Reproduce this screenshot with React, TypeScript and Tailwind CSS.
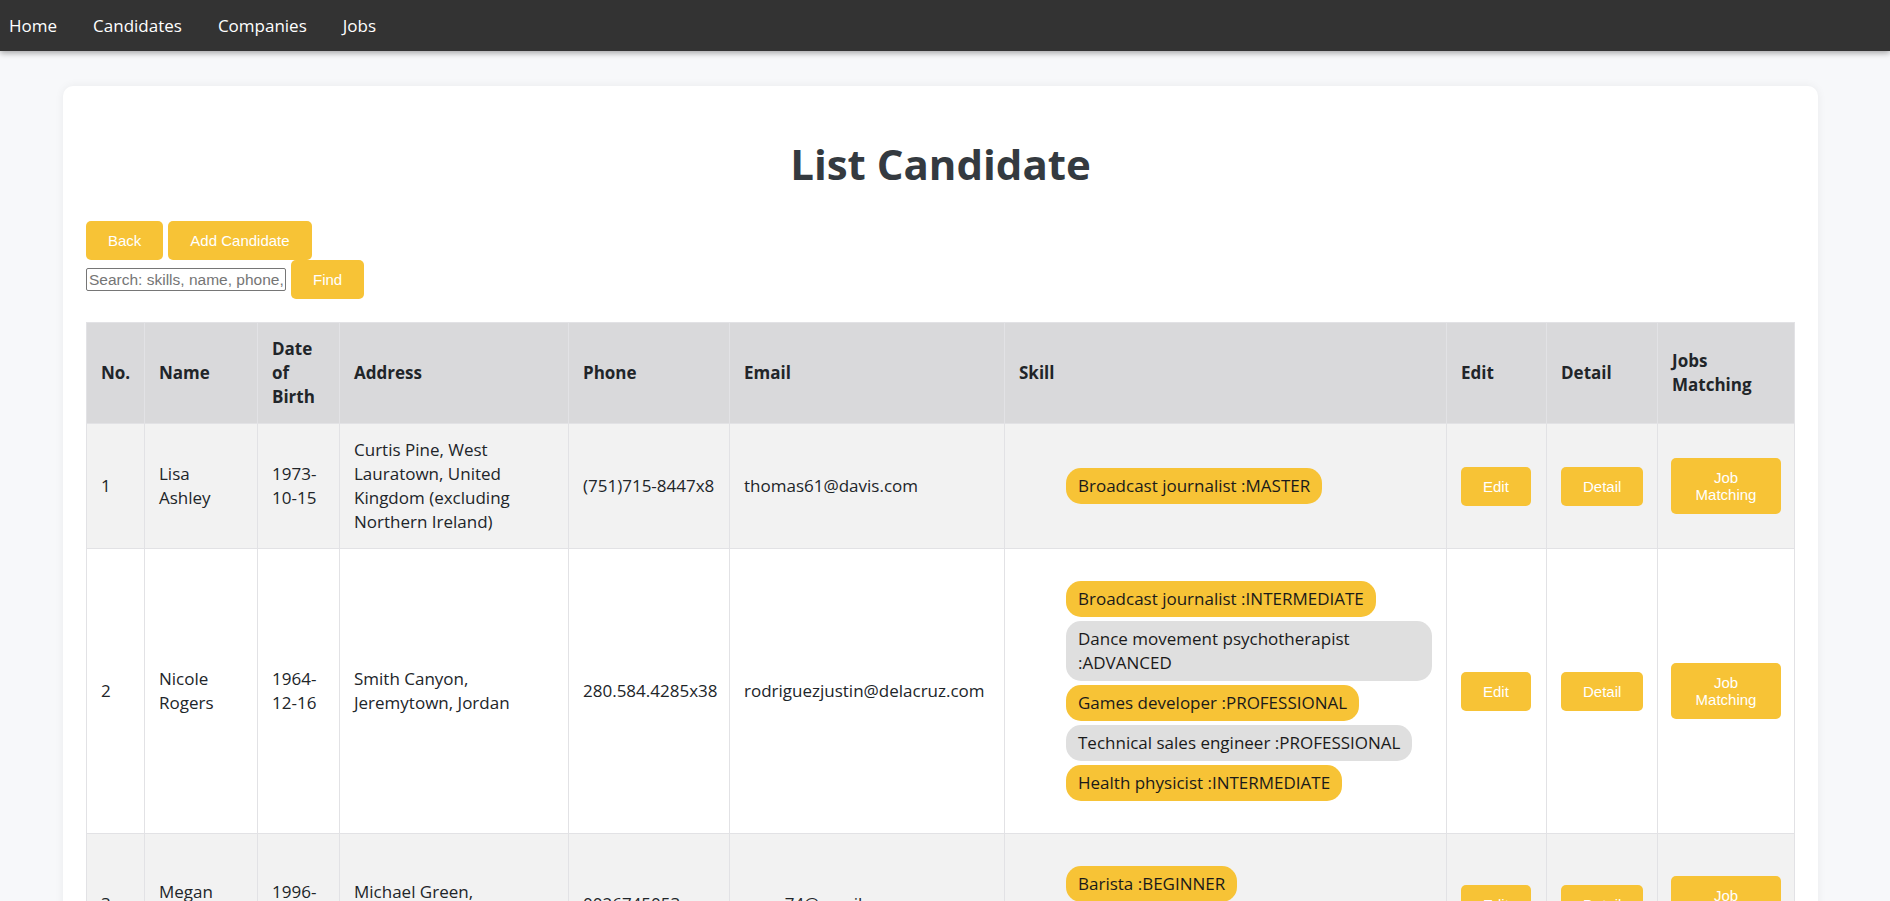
import React from 'react';

type Skill = { name: string; level: string };
type Candidate = {
  id: number;
  name: string;
  dob: string;
  address: string;
  phone: string;
  email: string;
  skills: Skill[];
};

const candidates: Candidate[] = [
  {
    id: 1,
    name: 'Lisa Ashley',
    dob: '1973-10-15',
    address: 'Curtis Pine, West Lauratown, United Kingdom (excluding Northern Ireland)',
    phone: '(751)715-8447x8',
    email: 'thomas61@davis.com',
    skills: [{ name: 'Broadcast journalist', level: 'MASTER' }],
  },
  {
    id: 2,
    name: 'Nicole Rogers',
    dob: '1964-12-16',
    address: 'Smith Canyon, Jeremytown, Jordan',
    phone: '280.584.4285x38',
    email: 'rodriguezjustin@delacruz.com',
    skills: [
      { name: 'Broadcast journalist', level: 'INTERMEDIATE' },
      { name: 'Dance movement psychotherapist', level: 'ADVANCED' },
      { name: 'Games developer', level: 'PROFESSIONAL' },
      { name: 'Technical sales engineer', level: 'PROFESSIONAL' },
      { name: 'Health physicist', level: 'INTERMEDIATE' },
    ],
  },
  {
    id: 3,
    name: 'Megan Wilson',
    dob: '1996-04-22',
    address: 'Michael Green, Daveport, Peru',
    phone: '0026745053',
    email: 'mary74@gmail.com',
    skills: [
      { name: 'Barista', level: 'BEGINNER' },
      { name: 'Data scientist', level: 'ADVANCED' },
    ],
  },
];

const btn =
  "bg-[#f7c336] text-white font-['Liberation_Sans',Arial,sans-serif] text-[15px] leading-[17px] rounded-[5px] px-[22px] py-[11px]";

const headers = [
  { label: 'No.', w: 'w-[58px]' },
  { label: 'Name', w: 'w-[113px]' },
  { label: 'Date of Birth', w: 'w-[82px]' },
  { label: 'Address', w: 'w-[229px]' },
  { label: 'Phone', w: 'w-[161px]' },
  { label: 'Email', w: 'w-[275px]' },
  { label: 'Skill', w: 'w-[442px]' },
  { label: 'Edit', w: 'w-[100px]' },
  { label: 'Detail', w: 'w-[111px]' },
  { label: 'Jobs Matching', w: 'w-[137px]' },
];

const cell = 'px-[14px] py-[14px] border border-[#e2e2e5] align-middle';

const App: React.FC = () => {
  return (
    <div className="min-h-screen bg-[#f7f8fa] font-['Open_Sans','Noto_Sans',sans-serif] text-[#212529]">
      {/* Top nav */}
      <nav className="h-[51px] bg-[#333333] flex items-center gap-[36px] pl-[9px] text-[17px] text-white shadow-[0_2px_6px_rgba(0,0,0,0.35)] relative z-10">
        <span>Home</span>
        <span>Candidates</span>
        <span>Companies</span>
        <span>Jobs</span>
      </nav>

      <div className="pt-[35px] pl-[63px] pr-[72px] pb-10">
        <div className="bg-white rounded-[10px] shadow-[0_0_10px_rgba(0,0,0,0.06)] px-[23px] pb-6">
          <h1 className="text-center text-[42px] leading-[50px] font-bold text-[#343a40] pt-[53px] mb-[32px]">
            List Candidate
          </h1>

          <div className="flex gap-[5px]">
            <button className={btn}>Back</button>
            <button className={btn}>Add Candidate</button>
          </div>
          <div className="flex items-center gap-[5px]">
            <input
              placeholder="Search: skills, name, phone, email"
              className="w-[200px] h-[23px] border border-[#767676] rounded-[2px] px-[2px] text-[15.5px] font-['Liberation_Sans',Arial,sans-serif] placeholder:text-[#757575] outline-none"
            />
            <button className={btn}>Find</button>
          </div>

          <table className="mt-[23px] w-full table-fixed border-collapse border border-[#dee2e6] text-[17px] leading-[24px]">
            <thead>
              <tr className="bg-[#d9d9db]">
                {headers.map((h) => (
                  <th key={h.label} className={`${h.w} ${cell} text-left font-bold`}>
                    {h.label}
                  </th>
                ))}
              </tr>
            </thead>
            <tbody>
              {candidates.map((c, i) => (
                <tr key={c.id} className={i % 2 === 0 ? 'bg-[#f2f2f2]' : 'bg-white'}>
                  <td className={cell}>{c.id}</td>
                  <td className={cell}>{c.name}</td>
                  <td className={cell}>{c.dob}</td>
                  <td className={cell}>{c.address}</td>
                  <td className={cell}>{c.phone}</td>
                  <td className={cell}>{c.email}</td>
                  <td className={cell}>
                    <ul className="flex flex-col items-start gap-[4px] pl-[47px] my-[18px]">
                      {c.skills.map((s, j) => (
                        <li
                          key={s.name}
                          className={`${j % 2 === 0 ? 'bg-[#f7c336]' : 'bg-[#dfdfdf]'} rounded-[15px] px-[12px] py-[6px] text-[#1a1a1a]`}
                        >
                          {s.name} :{s.level}
                        </li>
                      ))}
                    </ul>
                  </td>
                  <td className={cell}>
                    <button className={btn}>Edit</button>
                  </td>
                  <td className={cell}>
                    <button className={btn}>Detail</button>
                  </td>
                  <td className="px-[13px] py-[14px] border border-[#e2e2e5] align-middle">
                    <button className={`${btn} w-full`}>Job Matching</button>
                  </td>
                </tr>
              ))}
            </tbody>
          </table>
        </div>
      </div>
    </div>
  );
};

export default App;
